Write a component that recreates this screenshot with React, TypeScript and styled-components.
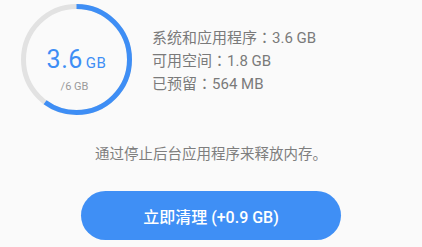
import React from "react"
import styled, { createGlobalStyle } from "styled-components"

const Global = createGlobalStyle`
  html, body { margin: 0; padding: 0; background: #fafafa; }
  body { font-family: Roboto, "Noto Sans CJK SC", sans-serif; }
`

const Page = styled.div`
  width: 422px;
  height: 247px;
  display: flex;
  flex-direction: column;
  align-items: center;
  overflow: hidden;
  background: #fafafa;
`

const Top = styled.div`
  width: 100%;
  display: flex;
  flex-direction: row;
  align-items: center;
  padding: 4px 0 0 21px;
  box-sizing: border-box;
`

const Gauge = styled.div`
  position: relative;
  width: 111px;
  height: 111px;
  flex-shrink: 0;
`

const GaugeText = styled.div`
  position: absolute;
  inset: 0;
  display: flex;
  flex-direction: column;
  align-items: center;
  justify-content: center;
  padding-top: 20px;
`

const Big = styled.div`
  color: #3e8ef5;
  font-size: 25px;
  line-height: 28px;
  letter-spacing: 0.5px;
  span { font-size: 15px; margin-left: 3px; }
`

const Small = styled.div`
  color: #9a9a9a;
  font-size: 11px;
  margin-top: 3px;
  margin-left: -4px;
`

const Info = styled.div`
  margin-left: 20px;
  display: flex;
  flex-direction: column;
  padding-top: 2px;
`

const Line = styled.div`
  color: #7a7a7a;
  font-size: 15px;
  line-height: 21px;
`

const Colon = styled.span`
  font-family: "Noto Sans CJK TC", sans-serif;
`

const Hint = styled.div`
  margin-top: 30px;
  color: #7e7e7e;
  font-size: 14.5px;
  line-height: 19px;
`

const CleanButton = styled.button`
  margin-top: 27px;
  width: 260px;
  height: 49px;
  border: none;
  border-radius: 25px;
  background: #3f8ff5;
  color: #fff;
  font-family: Roboto, "Noto Sans CJK SC", sans-serif;
  font-size: 16px;
  font-weight: 500;
  flex-shrink: 0;
`

function Ring({ ratio }: { ratio: number }) {
  const r = 53
  const c = 2 * Math.PI * r
  return (
    <svg width="111" height="111" viewBox="0 0 111 111">
      <circle cx="55.5" cy="55.5" r={r} fill="none" stroke="#e2e2e2" strokeWidth="5" />
      <circle
        cx="55.5"
        cy="55.5"
        r={r}
        fill="none"
        stroke="#3e8ef5"
        strokeWidth="5"
        strokeDasharray={`${c * ratio} ${c}`}
        transform="rotate(-90 55.5 55.5)"
      />
    </svg>
  )
}

const rows = [
  ["系统和应用程序", "3.6 GB"],
  ["可用空间", "1.8 GB"],
  ["已预留", "564 MB"],
]

export default function App() {
  return (
    <Page>
      <Global />
      <Top>
        <Gauge>
          <Ring ratio={3.6 / 6} />
          <GaugeText>
            <Big>3.6<span>GB</span></Big>
            <Small>/6 GB</Small>
          </GaugeText>
        </Gauge>
        <Info>
          {rows.map(([label, value]) => (
            <Line key={label}>
              {label}<Colon>：</Colon>{value}
            </Line>
          ))}
        </Info>
      </Top>
      <Hint>通过停止后台应用程序来释放内存。</Hint>
      <CleanButton>立即清理 (+0.9 GB)</CleanButton>
    </Page>
  )
}
